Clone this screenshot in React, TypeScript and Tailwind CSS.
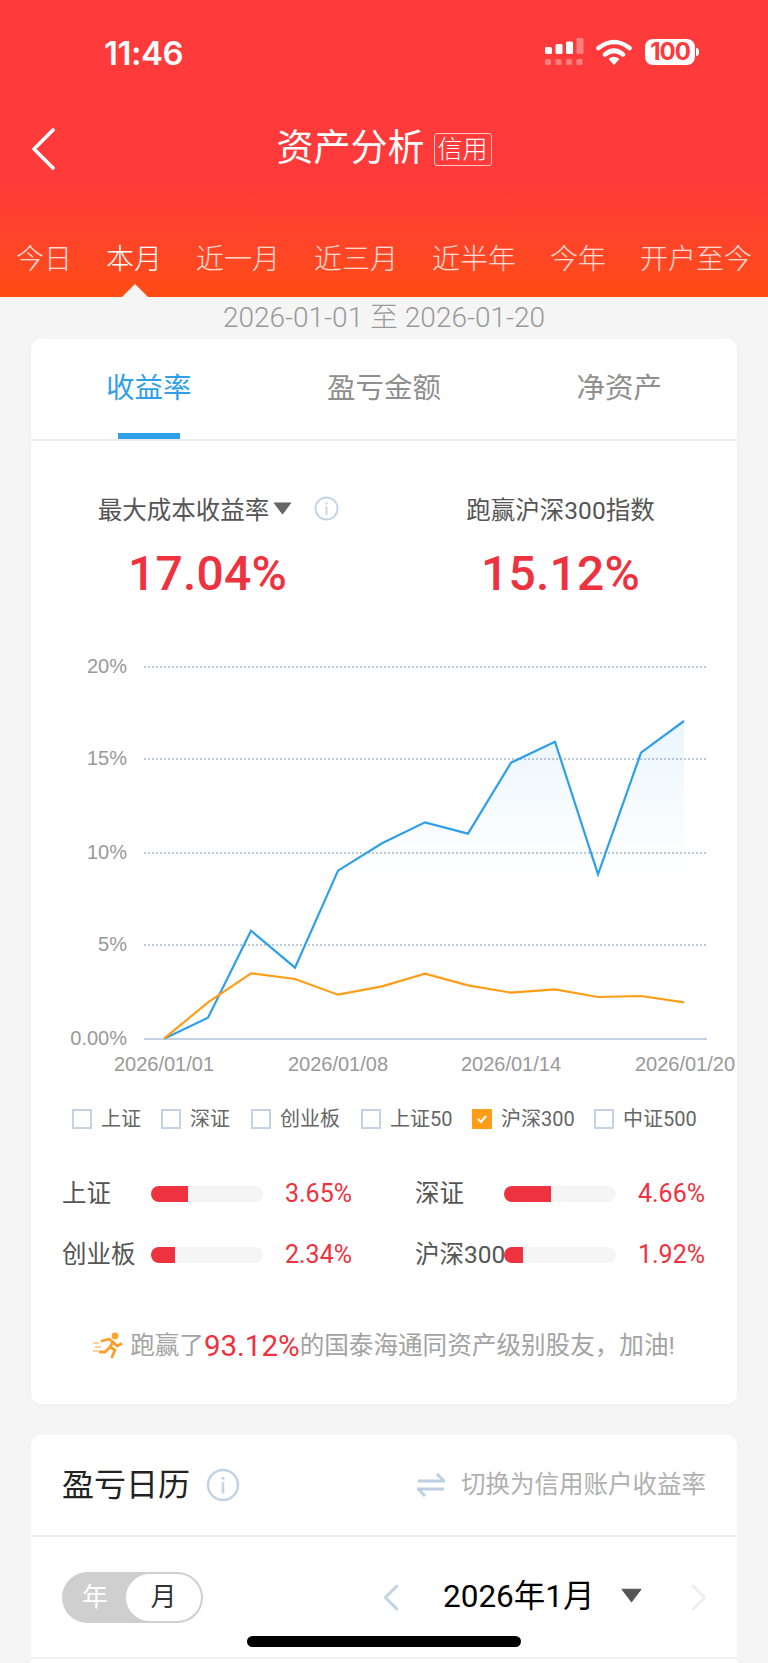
import React from "react";

const font = "font-['Roboto','Noto_Sans_CJK_SC',sans-serif]";

const blue: [number, number][] = [[163,1196],[207,1133],[250,872],[294,983],[337,692],[381,610],[424,547],[467,581],[510,368],[554,305],[597,703],[640,338],[683,243]];
const orange = [1196,1087,1000,1017,1064,1039,1001,1036,1058,1048,1071,1068,1087];
const Y = (v: number) => 640 + v / 3;
const bluePts = blue.map(([x, y]) => `${x},${Y(y)}`).join(" ");
const orangePts = blue.map(([x], i) => `${x},${Y(orange[i])}`).join(" ");

function Info({ size, cls }: { size: number; cls?: string }) {
  return (
    <svg width={size} height={size} viewBox="0 0 24 24" className={cls} fill="none">
      <circle cx="12" cy="12" r="10.6" stroke="#c3d4e6" strokeWidth="1.8" />
      <circle cx="12" cy="7.2" r="1.1" fill="#c3d4e6" />
      <rect x="11.1" y="10" width="1.8" height="8" fill="#c3d4e6" />
    </svg>
  );
}

function Tri({ w, h, color }: { w: number; h: number; color: string }) {
  return (
    <svg width={w} height={h} viewBox="0 0 20 14">
      <path d="M1 1 H19 L10 13 Z" fill={color} stroke={color} strokeLinejoin="round" />
    </svg>
  );
}

function Chevron({ dir, color, w, h, sw }: { dir: "l" | "r"; color: string; w: number; h: number; sw: number }) {
  return (
    <svg width={w} height={h} viewBox="0 0 16 26" fill="none">
      <path d={dir === "l" ? "M14 2 L3 13 L14 24" : "M2 2 L13 13 L2 24"} stroke={color} strokeWidth={sw} strokeLinecap="round" strokeLinejoin="round" />
    </svg>
  );
}

function Check({ label, checked, cls }: { label: string; checked?: boolean; cls?: string }) {
  return (
    <div className={`flex items-center gap-[9px] ${cls ?? ""}`}>
      {checked ? (
        <div className="w-5 h-5 bg-[#ff9d19] flex items-center justify-center">
          <svg width="12" height="10" viewBox="0 0 12 10" fill="none">
            <path d="M2 5 L5 8 L10 2" stroke="#fff" strokeWidth="2" />
          </svg>
        </div>
      ) : (
        <div className="w-5 h-5 border-2 border-[#c3d2e4]" />
      )}
      <span className="text-[20px] leading-[28px] text-[#666]">{label}</span>
    </div>
  );
}

function Stat({ label, pct, value }: { label: string; pct: number; value: string }) {
  return (
    <div className="flex items-center h-[30px] pl-[31px] pr-[32px]">
      <span className="w-[89px] shrink-0 text-[24.5px] leading-[30px] text-[#555] whitespace-nowrap">{label}</span>
      <div className="w-[112px] h-4 rounded-full bg-[#f5f5f5] overflow-hidden shrink-0">
        <div className="h-full bg-[#ee3240]" style={{ width: pct }} />
      </div>
      <span className="flex-1 text-right text-[25px] leading-[30px] text-[#ee3240]">{value}</span>
    </div>
  );
}

const periods = ["今日", "本月", "近一月", "近三月", "近半年", "今年", "开户至今"];

export default function App() {
  return (
    <div className={`relative w-[768px] h-[1663px] overflow-hidden bg-[#f5f5f5] ${font}`}>
      {/* Header */}
      <header className="relative h-[297px] bg-gradient-to-b from-[#ff3a3a] from-60% to-[#ff4c0f] text-white">
        <div className="flex items-center justify-between h-[104px] pl-[104px] pr-[69px]">
          <span className="mt-[3px] text-[33px] font-semibold font-['Inter'] leading-none tracking-[-0.5px]">11:46</span>
          <div className="flex items-center">
            <svg width="40" height="28" viewBox="0 0 40 28" fill="#fff">
              <rect x="0" y="9" width="7" height="7" rx="1.5" />
              <rect x="10.5" y="6" width="7" height="10" rx="1.5" />
              <rect x="21" y="3.5" width="7" height="12.5" rx="1.5" />
              <rect x="31.5" y="0" width="7" height="16" rx="1.5" opacity=".35" />
              <g opacity=".35">
                <rect x="0" y="21" width="6" height="6" rx="1.5" />
                <rect x="10.5" y="21" width="6" height="6" rx="1.5" />
                <rect x="21" y="21" width="6" height="6" rx="1.5" />
                <rect x="31.5" y="21" width="6" height="6" rx="1.5" />
              </g>
            </svg>
            <svg width="36" height="26" viewBox="0 0 36 26" fill="none" className="ml-[11px]">
              <path d="M2.5 9 Q18 -3 33.5 9" stroke="#fff" strokeWidth="4.6" strokeLinecap="round" />
              <path d="M9 15.5 Q18 8 27 15.5" stroke="#fff" strokeWidth="4.6" strokeLinecap="round" />
              <path d="M12.6 20 Q18 15.5 23.4 20 L18 26 Z" fill="#fff" />
            </svg>
            <div className="ml-[13px] w-[50px] h-[26px] rounded-[8px] bg-white flex items-center justify-center">
              <span className="text-[#ff3a3a] text-[24px] font-bold font-['Inter'] leading-none tracking-[-1px]">100</span>
            </div>
            <div className="ml-[1px] w-[3px] h-[8px] rounded-r-full bg-white" />
          </div>
        </div>
        <div className="relative flex items-center justify-center h-[90px]">
          <svg width="24" height="42" viewBox="0 0 24 42" fill="none" className="absolute left-[31px] top-[24px]">
            <path d="M22 2 L3 21 L22 40" stroke="#fff" strokeWidth="3.6" strokeLinecap="round" strokeLinejoin="round" />
          </svg>
          <span className="text-[37px] leading-[44px]">资产分析</span>
          <span className="ml-[9px] w-[58px] h-[33px] rounded-[3px] border border-white/70 flex items-center justify-center text-[25px] leading-none font-light">信用</span>
        </div>
        <div className="flex justify-between pl-[16px] pr-[16px] mt-[46px]">
          {periods.map((p, i) => (
            <span key={p} className={`text-[28px] leading-[40px] font-light ${i === 1 ? "text-white" : "text-white/80"}`}>{p}</span>
          ))}
        </div>
        <svg width="28" height="13" viewBox="0 0 28 13" className="absolute left-[121px] bottom-0">
          <path d="M1 13 L14 0 L27 13 Z" fill="#f5f5f5" />
        </svg>
      </header>

      <div className="h-[42px] flex items-center justify-center text-[28px] leading-none text-[#999] font-light">2026-01-01 至 2026-01-20</div>

      {/* Card 1 */}
      <section className="mx-[31px] w-[706px] h-[1065px] bg-white rounded-[10px] shadow-[0_1px_4px_rgba(0,0,0,0.03)]">
        <div className="grid grid-cols-3 h-[102px] border-b-2 border-[#ececec]">
          <div className="relative flex items-center justify-center text-[28.5px] text-[#2f9fe9]">
            收益率
            <div className="absolute left-[87px] bottom-0 w-[62px] h-[6px] bg-[#2f9fe9]" />
          </div>
          <div className="flex items-center justify-center text-[28.5px] text-[#8f8f8f]">盈亏金额</div>
          <div className="flex items-center justify-center text-[28.5px] text-[#8f8f8f]">净资产</div>
        </div>

        <div className="grid grid-cols-2 mt-[50px]">
          <div className="flex flex-col items-center">
            <div className="relative flex items-center h-[40px] text-[24.5px] text-[#555] -ml-[25px]">
              最大成本收益率
              <span className="ml-[4px] mb-[6px]"><Tri w={19} h={13} color="#666" /></span>
              <Info size={25} cls="absolute left-[216px] top-[5px]" />
            </div>
            <div className="mt-[13px] text-[48px] leading-[60px] text-[#ee3240] font-medium tracking-[0.2px]">17.04%</div>
          </div>
          <div className="flex flex-col items-center">
            <div className="flex items-center h-[40px] text-[24.5px] text-[#555]">跑赢沪深300指数</div>
            <div className="mt-[13px] text-[48px] leading-[60px] text-[#ee3240] font-medium tracking-[0.2px]">15.12%</div>
          </div>
        </div>

        <svg width="706" height="445" viewBox="30 640 706 445" className="mt-[36px] block font-['Liberation_Sans']">
          <defs>
            <linearGradient id="area" gradientUnits="userSpaceOnUse" x1="0" y1="720" x2="0" y2="875">
              <stop offset="0" stopColor="#2f9fe9" stopOpacity="0.1" />
              <stop offset="1" stopColor="#2f9fe9" stopOpacity="0" />
            </linearGradient>
          </defs>
          {[[667, "20%"], [759, "15%"], [853, "10%"], [945, "5%"]].map(([y, t]) => (
            <g key={t as string}>
              <line x1="143" x2="706" y1={y as number} y2={y as number} stroke="#bcc9dc" strokeWidth="2" strokeDasharray="2 2" />
              <text x="126" y={(y as number) + 6} textAnchor="end" fontSize="20" fill="#999">{t}</text>
            </g>
          ))}
          <text x="126" y="1045" textAnchor="end" fontSize="20" fill="#999">0.00%</text>
          <polygon points={`163,${Y(1196)} ${bluePts} 683,${Y(1196)}`} fill="url(#area)" />
          <line x1="143" x2="706" y1="1039" y2="1039" stroke="#c3d2e2" strokeWidth="2" />
          <polyline points={bluePts} fill="none" stroke="#2f9fe9" strokeWidth="2.2" />
          <polyline points={orangePts} fill="none" stroke="#ff9d19" strokeWidth="2.2" />
          {[[163, "2026/01/01"], [337, "2026/01/08"], [510, "2026/01/14"], [684, "2026/01/20"]].map(([x, t]) => (
            <text key={t as string} x={x as number} y="1071" textAnchor="middle" fontSize="20" fill="#999">{t}</text>
          ))}
        </svg>

        <div className="flex pl-[41px] h-[28px] mt-[20px]">
          <Check label="上证" cls="w-[89px]" />
          <Check label="深证" cls="w-[90px]" />
          <Check label="创业板" cls="w-[110px]" />
          <Check label="上证50" cls="w-[111px]" />
          <Check label="沪深300" checked cls="w-[122px]" />
          <Check label="中证500" />
        </div>

        <div className="grid grid-cols-2 gap-y-[31px] mt-[46px]">
          <Stat label="上证" pct={37} value="3.65%" />
          <Stat label="深证" pct={47} value="4.66%" />
          <Stat label="创业板" pct={24} value="2.34%" />
          <Stat label="沪深300" pct={19} value="1.92%" />
        </div>

        <div className="flex items-center justify-center mt-[56px] h-[40px] text-[24.6px] text-[#a3a3a3]">
          <svg width="30" height="28" viewBox="0 0 30 28" fill="none" className="mr-[7px]">
            <circle cx="22" cy="4" r="3.4" fill="#ffa42e" />
            <path d="M9 9 L16 7 L20 10 L17 15 L22 18 L19 25 M17 15 L12 20 L7 20 M20 10 L24 14 L28 12" stroke="#ff9d2a" strokeWidth="2.8" strokeLinecap="round" strokeLinejoin="round" />
            <path d="M0 11 H6 M2 15 H8 M0 19 H5" stroke="#ffc27a" strokeWidth="1.6" />
          </svg>
          跑赢了<span className="text-[29.5px] text-[#ee3240]">93.12%</span>的国泰海通同资产级别股友，加油!
        </div>
      </section>

      {/* Card 2 */}
      <section className="mx-[31px] w-[706px] mt-[31px] bg-white rounded-t-[10px]">
        <div className="flex items-center justify-between h-[102px] pl-[31px] pr-[31px] border-b-2 border-[#ececec]">
          <div className="flex items-center">
            <span className="text-[32px] leading-[40px] text-[#222]">盈亏日历</span>
            <Info size={34} cls="ml-[16px]" />
          </div>
          <div className="flex items-center">
            <svg width="28" height="26" viewBox="0 0 28 26" fill="none" className="mr-[16px]">
              <path d="M1 9 H27 L20 2" stroke="#bdcfe2" strokeWidth="3" />
              <path d="M27 17 H1 L8 24" stroke="#bdcfe2" strokeWidth="3" />
            </svg>
            <span className="text-[24.5px] leading-[32px] text-[#b0b0b0]">切换为信用账户收益率</span>
          </div>
        </div>
        <div className="relative flex items-center h-[122px] border-b-2 border-[#f0f0f0]">
          <div className="ml-[31px] w-[141px] h-[51px] rounded-full bg-[#cfcfcf] flex items-center p-[2px]">
            <span className="w-[62px] text-center text-[26px] text-white">年</span>
            <span className="w-[75px] h-[47px] rounded-full bg-white flex items-center justify-center text-[26px] text-[#333]">月</span>
          </div>
          <div className="ml-[179px]"><Chevron dir="l" color="#c3d4e6" w={17} h={27} sw={3} /></div>
          <span className="ml-[44px] text-[31.5px] leading-[40px] text-black">2026年1月</span>
          <span className="ml-[26px] mb-[4px]"><Tri w={21} h={15} color="#555" /></span>
          <span className="ml-[49px]"><Chevron dir="r" color="#eeeeee" w={17} h={27} sw={3} /></span>
        </div>
        <div className="h-[10px]" />
      </section>

      <div className="absolute left-[247px] top-[1636px] w-[274px] h-[11px] rounded-full bg-black" />
    </div>
  );
}
